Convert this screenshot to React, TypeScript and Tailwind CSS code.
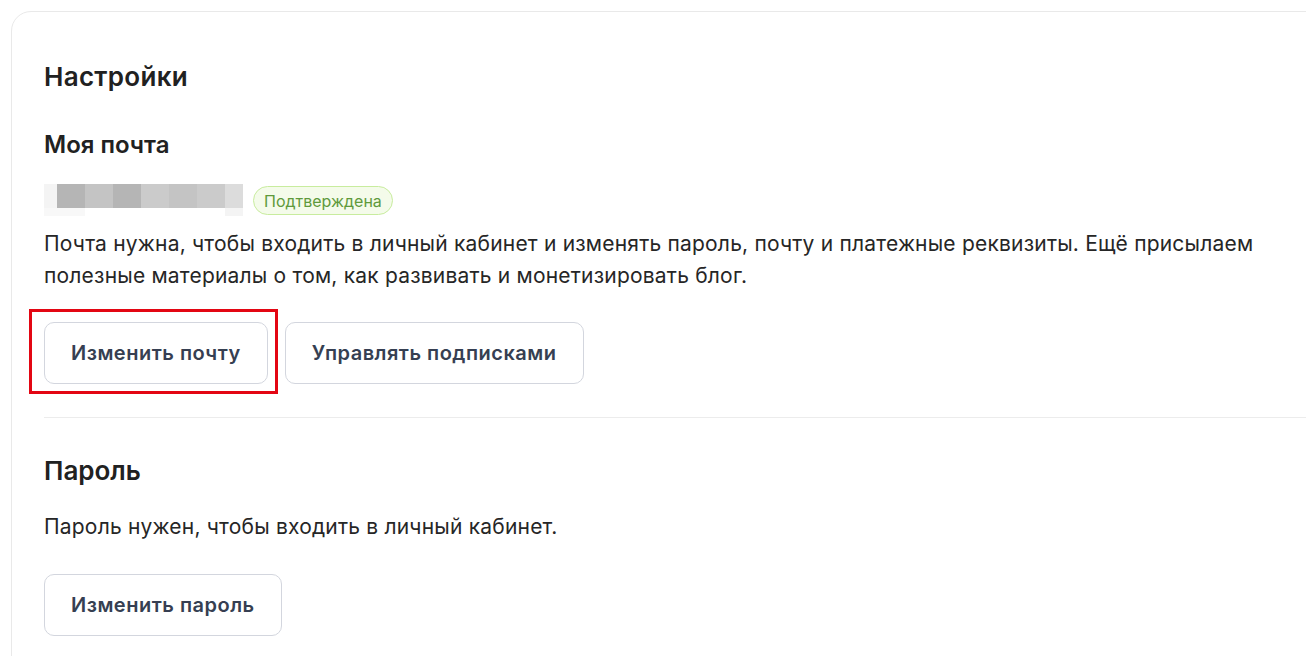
const emailBlocks = [
  { w: "w-[13px]", top: "bg-[#f4f4f4]", bottom: "bg-[#f8f8f8]" },
  { w: "w-[28px]", top: "bg-[#b5b5b5]", bottom: "bg-[#f8f8f8]" },
  { w: "w-[28px]", top: "bg-[#c4c4c4]", bottom: "bg-white" },
  { w: "w-[28px]", top: "bg-[#b5b5b5]", bottom: "bg-white" },
  { w: "w-[28px]", top: "bg-[#cbcbcb]", bottom: "bg-white" },
  { w: "w-[28px]", top: "bg-[#c4c4c4]", bottom: "bg-white" },
  { w: "w-[28px]", top: "bg-[#cbcbcb]", bottom: "bg-white" },
  { w: "w-[18px]", top: "bg-[#dcdcdc]", bottom: "bg-[#f4f4f4]" },
];

function OutlineButton({ children }: { children: React.ReactNode }) {
  return (
    <button className="h-[62px] px-[26px] rounded-[10px] border border-[#d3d6de] bg-white text-[20px] tracking-[0.5px] font-semibold text-[#363f52] whitespace-nowrap">
      {children}
    </button>
  );
}

export default function App() {
  return (
    <div
      className="min-h-screen w-full overflow-hidden bg-white pl-[11px] pt-[11px]"
      style={{ fontFamily: "Inter, 'Noto Sans', sans-serif" }}
    >
      <div className="w-[1330px] rounded-tl-[20px] border border-[#e9e9e9] bg-white pl-[32px] pt-[48px] pb-[40px]">
        {/* Settings */}
        <h1 className="text-[26px] leading-[34px] tracking-[0.3px] font-semibold text-[#212121]">Настройки</h1>

        <section className="mt-[35px]">
          <h2 className="text-[24px] leading-8 font-semibold text-[#212121]">Моя почта</h2>

          <div className="mt-[23px] flex items-start gap-[10px]">
            <div className="flex">
              {emailBlocks.map((b, i) => (
                <div key={i} className={`flex flex-col ${b.w}`}>
                  <div className={`h-[24px] ${b.top}`} />
                  <div className={`h-[8px] ${b.bottom}`} />
                </div>
              ))}
            </div>
            <span className="mt-[2px] h-[29px] px-[10px] flex items-center rounded-full border border-[#c8ec9e] bg-[#f4fbea] text-[16px] text-[#5f9a3c]">
              Подтверждена
            </span>
          </div>

          <p className="mt-[12px] w-[1240px] text-[21px] leading-8 tracking-[0.2px] text-[#262626]">
            Почта нужна, чтобы входить в личный кабинет и изменять пароль, почту и платежные реквизиты. Ещё присылаем полезные материалы о том, как развивать и монетизировать блог.
          </p>

          <div className="mt-[30px] flex gap-[17px]">
            <div className="relative">
              <OutlineButton>Изменить почту</OutlineButton>
              <div className="pointer-events-none absolute -left-[15px] -top-[13px] -right-[10px] -bottom-[10px] border-[3px] border-[#e30613]" />
            </div>
            <OutlineButton>Управлять подписками</OutlineButton>
          </div>
        </section>

        <div className="mt-[33px] h-px bg-[#ececec]" />

        {/* Password */}
        <section className="mt-[36px]">
          <h2 className="text-[26px] leading-[34px] font-semibold text-[#212121]">Пароль</h2>
          <p className="mt-[23px] text-[21px] leading-8 tracking-[0.2px] text-[#262626]">
            Пароль нужен, чтобы входить в личный кабинет.
          </p>
          <div className="mt-[31px] flex">
            <OutlineButton>Изменить пароль</OutlineButton>
          </div>
        </section>
      </div>
    </div>
  );
}
